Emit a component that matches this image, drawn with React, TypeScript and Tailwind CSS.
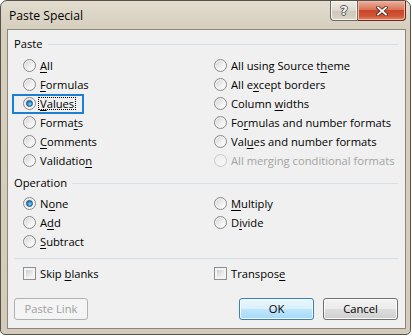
import React from 'react'

// Label with an access-key underline at index k
function Key({ text, k, className = '' }: { text: string; k?: number; className?: string }) {
  if (k === undefined) return <span className={className}>{text}</span>
  return (
    <span className={className}>
      {text.slice(0, k)}
      <u className="underline decoration-1 underline-offset-[2px]">{text[k]}</u>
      {text.slice(k + 1)}
    </span>
  )
}

function Radio({ checked, disabled }: { checked?: boolean; disabled?: boolean }) {
  return (
    <span
      className={
        'w-[13px] h-[13px] shrink-0 rounded-full border flex items-center justify-center ' +
        (disabled
          ? 'border-[#c9c9c9] bg-[linear-gradient(135deg,#ececec,#f8f8f8)]'
          : 'border-[#8a8a8a] bg-[linear-gradient(135deg,#cfcfcf,#f3f3f3_60%,#ffffff)] shadow-[inset_0_0_0_1px_#f6f6f6]')
      }
    >
      {checked && (
        <span className="w-[7px] h-[7px] rounded-full border border-[#174f7e] bg-[radial-gradient(circle_at_60%_65%,#7fd0fb,#2a86c9_60%,#175f99)]" />
      )}
    </span>
  )
}

function Check() {
  return (
    <span className="w-[13px] h-[13px] shrink-0 border border-[#8e8f8f] bg-[#f4f4f4] p-[2px] flex">
      <span className="flex-1 bg-[linear-gradient(135deg,#c9cdd2,#e4e6e8_55%,#f6f6f6)]" />
    </span>
  )
}

type Opt = { text: string; k?: number; checked?: boolean; disabled?: boolean; focus?: boolean }

function Row({ o }: { o: Opt }) {
  return (
    <div className="relative h-[19px] flex items-center gap-[4px]">
      {o.focus && (
        // highlight box drawn over the row
        <span className="absolute left-[-11px] top-0 w-[72px] h-[20px] border-2 border-[#1b7fd6] pointer-events-none" />
      )}
      <Radio checked={o.checked} disabled={o.disabled} />
      {o.focus ? (
        <span className="outline outline-1 outline-dotted outline-black px-[1px] -ml-[1px]">
          <Key text={o.text} k={o.k} />
        </span>
      ) : (
        <Key text={o.text} k={o.k} className={o.disabled ? 'text-[#a3a3a3]' : ''} />
      )}
    </div>
  )
}

function GroupLabel({ title }: { title: string }) {
  return (
    <div className="h-[16px] flex items-center pl-[6px] pr-[7px]">
      <span>{title}</span>
      <div className="flex-1 h-px bg-[#d5dfe5] ml-[5px]" />
    </div>
  )
}

const pasteLeft: Opt[] = [
  { text: 'All', k: 0 },
  { text: 'Formulas', k: 0 },
  { text: 'Values', k: 0, checked: true, focus: true },
  { text: 'Formats', k: 5 },
  { text: 'Comments', k: 0 },
  { text: 'Validation', k: 9 },
]

const pasteRight: Opt[] = [
  { text: 'All using Source theme', k: 18 },
  { text: 'All except borders', k: 5 },
  { text: 'Column widths', k: 7 },
  { text: 'Formulas and number formats', k: 2 },
  { text: 'Values and number formats', k: 3 },
  { text: 'All merging conditional formats', disabled: true },
]

const opLeft: Opt[] = [
  { text: 'None', k: 1, checked: true },
  { text: 'Add', k: 1 },
  { text: 'Subtract', k: 0 },
]

const opRight: Opt[] = [
  { text: 'Multiply', k: 0 },
  { text: 'Divide', k: 1 },
]

export default function App() {
  return (
    <div className="w-[412px] h-[336px] bg-white text-[11.2px] text-black font-['Open_Sans',sans-serif] leading-none">
      <div className="w-[411px] h-[335px] flex flex-col rounded-t-[7px] rounded-b-[5px] border border-[#575249] bg-[linear-gradient(to_bottom,#e2dccf,#d6cfbe_28px,#d3ccba)] pl-[6px] pr-[4px] pb-[5px]">
        {/* Title bar */}
        <div className="h-[28px] flex items-start justify-between">
          <span className="pt-[9px] pl-[2px] text-[12.2px]">Paste Special</span>
          <div className="flex">
            <div className="w-[28px] h-[20px] border border-t-0 border-[#6e6a60] rounded-bl-[4px] bg-[linear-gradient(to_bottom,#f1eee6,#ddd8cc_50%,#cdc7b8_51%,#d9d4c7)] flex items-center justify-center shadow-[inset_0_0_0_1px_#f7f5ef]">
              <span className="font-['DejaVu_Sans',sans-serif] font-bold text-[13px] text-[#f4f4f4] [text-shadow:1px_0_#555,-1px_0_#555,0_1px_#555,0_-1px_#555]">?</span>
            </div>
            <div className="w-[48px] h-[20px] border border-t-0 border-l-0 border-[#6b2a1d] rounded-br-[4px] bg-[linear-gradient(to_bottom,#eab0a0,#dc7458_45%,#c9452a_50%,#cf5536_80%,#e2866c)] flex items-center justify-center shadow-[inset_0_0_0_1px_#f0b8a8]">
              <svg width="12" height="10" viewBox="0 0 12 10">
                <path d="M2 1.5 L10 8.5 M10 1.5 L2 8.5" stroke="#5a2a20" strokeWidth="3.6" strokeLinecap="square" />
                <path d="M2 1.5 L10 8.5 M10 1.5 L2 8.5" stroke="#ffffff" strokeWidth="1.8" strokeLinecap="square" />
              </svg>
            </div>
          </div>
        </div>

        {/* Client area */}
        <div className="flex-1 border border-[#8c877a] bg-[#f0f0f0] flex flex-col">
          <div className="mt-[6px]">
            <GroupLabel title="Paste" />
          </div>
          <div className="mt-[4px] pl-[15px] flex">
            <div className="w-[191px] flex flex-col">
              {pasteLeft.map((o) => (
                <Row key={o.text} o={o} />
              ))}
            </div>
            <div className="flex flex-col">
              {pasteRight.map((o) => (
                <Row key={o.text} o={o} />
              ))}
            </div>
          </div>

          <div className="mt-[5px]">
            <GroupLabel title="Operation" />
          </div>
          <div className="mt-[3px] pl-[15px] flex">
            <div className="w-[191px] flex flex-col">
              {opLeft.map((o) => (
                <Row key={o.text} o={o} />
              ))}
            </div>
            <div className="flex flex-col">
              {opRight.map((o) => (
                <Row key={o.text} o={o} />
              ))}
            </div>
          </div>

          <div className="mt-[7px] ml-[6px] mr-[7px] h-px bg-[#d5dfe5]" />

          <div className="mt-[5px] pl-[15px] flex">
            <div className="w-[191px] h-[19px] flex items-center gap-[4px]">
              <Check />
              <Key text="Skip blanks" k={5} />
            </div>
            <div className="h-[19px] flex items-center gap-[4px]">
              <Check />
              <Key text="Transpose" k={8} />
            </div>
          </div>

          {/* Buttons */}
          <div className="mt-[15px] flex items-center pl-[6px] pr-[7px]">
            <button className="w-[74px] h-[22px] rounded-[3px] border border-[#adb2b5] bg-[#f4f4f4] text-[#a0a0a0]">
              Paste Link
            </button>
            <div className="ml-auto flex gap-[9px]">
              <button className="w-[75px] h-[22px] rounded-[3px] border border-[#3c7fb1] bg-[linear-gradient(to_bottom,#eaf6fd,#d9f0fc_50%,#bee6fd_51%,#a7d9f5)] shadow-[inset_0_0_0_1px_#f2fbff]">
                OK
              </button>
              <button className="w-[75px] h-[22px] rounded-[3px] border border-[#707070] bg-[linear-gradient(to_bottom,#f2f2f2,#ebebeb_50%,#dddddd_51%,#cfcfcf)] shadow-[inset_0_0_0_1px_#fbfbfb]">
                Cancel
              </button>
            </div>
          </div>
        </div>
      </div>
    </div>
  )
}
